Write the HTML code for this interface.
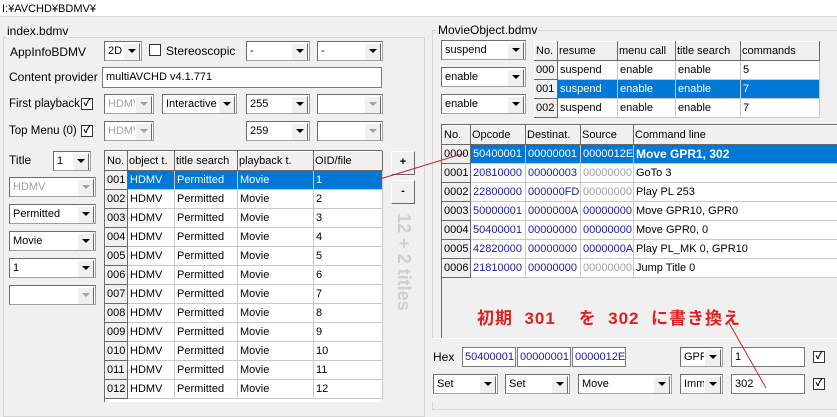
<!DOCTYPE html><html><head><meta charset="utf-8"><style>
*{box-sizing:border-box;margin:0;padding:0}
body{width:837px;height:402px;overflow:hidden;background:#f0f0f0;font-family:"Liberation Sans","Noto Sans CJK JP",sans-serif;font-size:11px;color:#000;position:relative}
.a{position:absolute}
.t{position:absolute;white-space:nowrap;line-height:14px;font-size:12px}
.sel{position:absolute;background:#fff;border:1px solid #a0a0a0;border-top-color:#6d6d6d;border-left-color:#6d6d6d;height:20px;padding:3px 0 0 3px;white-space:nowrap;overflow:hidden}
.sel:after{content:"";position:absolute;right:1px;top:1px;width:15px;height:16px;background:#f0f0f0;border:1px solid #fff;border-right-color:#696969;border-bottom-color:#696969}
.sel:before{content:"";position:absolute;right:5px;top:7px;border:4px solid transparent;border-top:4px solid #000;z-index:2}
.dis{color:#a0a0a0;background:#fff}
.dis:before{border-top-color:#a0a0a0}
.inp{position:absolute;background:#fff;border:1px solid #7a7a7a;height:21px;padding:3px 0 0 3px;white-space:nowrap;overflow:hidden}
.cb{position:absolute;width:12px;height:12px;background:#fff;border:1px solid #333;font-size:10px;line-height:10px;text-align:center;font-weight:bold}
table{position:absolute;border-collapse:collapse;background:#fff;table-layout:fixed}
td{border:1px solid #c8c8c8;height:19px;padding:0 1px 0 2px;white-space:nowrap;overflow:hidden;line-height:17px}
td.h{background:#f0f0f0;border:1px solid #888;border-color:#fff #696969 #696969 #fff;padding:0 1px}
tr.s td{background:#0078d7;color:#fff}
tr.s td.h{background:#f0f0f0;color:#000}
.b{color:#1a1aa8}.g{color:#a0a0a0}
.btn{position:absolute;width:24px;height:24px;background:#f0f0f0;border:1px solid #fff;border-right-color:#696969;border-bottom-color:#696969;text-align:center;font-weight:bold;line-height:20px}
</style></head><body>
<div class="a" style="left:0;top:0;width:837px;height:17px;background:#fff;border-bottom:1px solid #d8d8d8"></div>
<div class="t" style="left:2px;top:2px;font-size:11px">I:¥AVCHD¥BDMV¥</div>
<div class="a" style="left:3px;top:37px;width:422px;height:380px;border:1px solid #d5d5d5"></div>
<div class="t" style="left:6px;top:24px;background:#f0f0f0;padding:0 1px">index.bdmv</div>
<div class="a" style="left:432px;top:30px;width:420px;height:380px;border:1px solid #d5d5d5"></div>
<div class="t" style="left:437px;top:23px;background:#f0f0f0;padding:0 1px">MovieObject.bdmv</div>

<div class="t" style="left:10px;top:45px">AppInfoBDMV</div>
<div class="sel" style="left:104px;top:41px;width:38px">2D</div>
<div class="cb" style="left:149px;top:44px"></div>
<div class="t" style="left:166px;top:44px">Stereoscopic</div>
<div class="sel" style="left:246px;top:41px;width:64px">-</div>
<div class="sel" style="left:317px;top:41px;width:66px">-</div>
<div class="t" style="left:9px;top:70px">Content provider</div>
<div class="inp" style="left:102px;top:67px;width:280px">multiAVCHD v4.1.771</div>
<div class="t" style="left:9px;top:97px;font-size:11.5px">First playback</div>
<div class="cb" style="left:81px;top:98px">✓</div>
<div class="sel dis" style="left:104px;top:94px;width:50px">HDMV</div>
<div class="sel" style="left:162px;top:94px;width:75px">Interactive</div>
<div class="sel" style="left:246px;top:94px;width:64px">255</div>
<div class="sel dis" style="left:317px;top:94px;width:66px"></div>
<div class="t" style="left:9px;top:124px;font-size:11.5px">Top Menu (0)</div>
<div class="cb" style="left:81px;top:125px">✓</div>
<div class="sel dis" style="left:104px;top:121px;width:50px">HDMV</div>
<div class="sel" style="left:246px;top:121px;width:64px">259</div>
<div class="sel dis" style="left:317px;top:121px;width:66px"></div>
<div class="t" style="left:9px;top:153px">Title</div>
<div class="sel" style="left:53px;top:151px;width:38px">1</div>
<div class="sel dis" style="left:9px;top:177px;width:87px">HDMV</div>
<div class="sel" style="left:9px;top:204px;width:87px">Permitted</div>
<div class="sel" style="left:9px;top:231px;width:87px">Movie</div>
<div class="sel" style="left:9px;top:258px;width:87px">1</div>
<div class="sel dis" style="left:9px;top:285px;width:87px"></div>

<div class="a" style="left:104px;top:150px;width:278px;height:252px;background:#fff;border-left:1px solid #696969;border-top:1px solid #696969"></div>
<table style="left:105px;top:151px;width:277px">
<colgroup><col style="width:22px"><col style="width:47px"><col style="width:63px"><col style="width:76px"><col style="width:69px"></colgroup>
<tr><td class="h">No.</td><td class="h">object t.</td><td class="h">title search</td><td class="h">playback t.</td><td class="h">OID/file</td></tr>
<tr class="s"><td class="h">001</td><td>HDMV</td><td>Permitted</td><td>Movie</td><td>1</td></tr>
<tr><td class="h">002</td><td>HDMV</td><td>Permitted</td><td>Movie</td><td>2</td></tr>
<tr><td class="h">003</td><td>HDMV</td><td>Permitted</td><td>Movie</td><td>3</td></tr>
<tr><td class="h">004</td><td>HDMV</td><td>Permitted</td><td>Movie</td><td>4</td></tr>
<tr><td class="h">005</td><td>HDMV</td><td>Permitted</td><td>Movie</td><td>5</td></tr>
<tr><td class="h">006</td><td>HDMV</td><td>Permitted</td><td>Movie</td><td>6</td></tr>
<tr><td class="h">007</td><td>HDMV</td><td>Permitted</td><td>Movie</td><td>7</td></tr>
<tr><td class="h">008</td><td>HDMV</td><td>Permitted</td><td>Movie</td><td>8</td></tr>
<tr><td class="h">009</td><td>HDMV</td><td>Permitted</td><td>Movie</td><td>9</td></tr>
<tr><td class="h">010</td><td>HDMV</td><td>Permitted</td><td>Movie</td><td>10</td></tr>
<tr><td class="h">011</td><td>HDMV</td><td>Permitted</td><td>Movie</td><td>11</td></tr>
<tr><td class="h">012</td><td>HDMV</td><td>Permitted</td><td>Movie</td><td>12</td></tr>
</table>
<div class="btn" style="left:391px;top:151px">+</div>
<div class="btn" style="left:391px;top:180px">-</div>
<div class="t" style="left:404px;top:262px;transform:translate(-50%,-50%) rotate(90deg);font-size:18px;font-weight:bold;color:#cfcfcf;line-height:20px">12 + 2 titles</div>

<div class="sel" style="left:441px;top:40px;width:85px">suspend</div>
<div class="sel" style="left:441px;top:67px;width:85px">enable</div>
<div class="sel" style="left:441px;top:94px;width:85px">enable</div>
<table style="left:534px;top:41px;width:285px">
<colgroup><col style="width:23px"><col style="width:60px"><col style="width:58px"><col style="width:65px"><col style="width:79px"></colgroup>
<tr><td class="h">No.</td><td class="h">resume</td><td class="h">menu call</td><td class="h">title search</td><td class="h">commands</td></tr>
<tr><td class="h">000</td><td>suspend</td><td>enable</td><td>enable</td><td>5</td></tr>
<tr class="s"><td class="h">001</td><td>suspend</td><td>enable</td><td>enable</td><td>7</td></tr>
<tr><td class="h">002</td><td>suspend</td><td>enable</td><td>enable</td><td>7</td></tr>
</table>

<div class="a" style="left:441px;top:124px;width:396px;height:220px;border-left:1px solid #696969;border-top:1px solid #696969"></div>
<table style="left:442px;top:125px;width:400px;background:transparent">
<colgroup><col style="width:28px"><col style="width:55px"><col style="width:55px"><col style="width:53px"><col style="width:209px"></colgroup>
<tr><td class="h">No.</td><td class="h">Opcode</td><td class="h">Destinat.</td><td class="h">Source</td><td class="h">Command line</td></tr>
<tr class="s"><td class="h">0000</td><td>50400001</td><td>00000001</td><td>0000012E</td><td style="font-weight:bold;font-size:12px">Move GPR1, 302</td></tr>
<tr style="background:#fff"><td class="h">0001</td><td class="b">20810000</td><td class="b">00000003</td><td class="g">00000000</td><td>GoTo 3</td></tr>
<tr style="background:#fff"><td class="h">0002</td><td class="b">22800000</td><td class="b">000000FD</td><td class="g">00000000</td><td>Play PL 253</td></tr>
<tr style="background:#fff"><td class="h">0003</td><td class="b">50000001</td><td class="b">0000000A</td><td class="b">00000000</td><td>Move GPR10, GPR0</td></tr>
<tr style="background:#fff"><td class="h">0004</td><td class="b">50400001</td><td class="b">00000000</td><td class="b">00000000</td><td>Move GPR0, 0</td></tr>
<tr style="background:#fff"><td class="h">0005</td><td class="b">42820000</td><td class="b">00000000</td><td class="b">0000000A</td><td>Play PL_MK 0, GPR10</td></tr>
<tr style="background:#fff"><td class="h">0006</td><td class="b">21810000</td><td class="b">00000000</td><td class="g">00000000</td><td>Jump Title 0</td></tr>
</table>

<div class="t" style="left:477px;top:308px;font-size:17px;line-height:22px;font-weight:bold;color:#e02020;letter-spacing:1px">初期&nbsp;&nbsp;301&nbsp;&nbsp;&nbsp;&nbsp;を&nbsp;&nbsp;302&nbsp;&nbsp;に書き換え</div>

<div class="a" style="left:432px;top:338px;width:405px;height:64px;background:#f0f0f0;border-top:1px solid #fff"></div>
<div class="t" style="left:433px;top:350px">Hex</div>
<div class="inp b" style="left:462px;top:347px;width:54px;height:20px;padding-left:2px">50400001</div>
<div class="inp b" style="left:517px;top:347px;width:54px;height:20px;padding-left:2px">00000001</div>
<div class="inp b" style="left:572px;top:347px;width:54px;height:20px;padding-left:2px">0000012E</div>
<div class="sel" style="left:680px;top:347px;width:43px">GPR</div>
<div class="inp" style="left:731px;top:347px;width:74px;height:20px">1</div>
<div class="cb" style="left:813px;top:351px">✓</div>
<div class="sel" style="left:433px;top:374px;width:65px">Set</div>
<div class="sel" style="left:505px;top:374px;width:65px">Set</div>
<div class="sel" style="left:578px;top:374px;width:94px">Move</div>
<div class="sel" style="left:680px;top:374px;width:43px">Imm</div>
<div class="inp" style="left:731px;top:374px;width:74px;height:20px">302</div>
<div class="cb" style="left:813px;top:378px">✓</div>

<svg class="a" style="left:0;top:0" width="837" height="402"><line x1="380" y1="179" x2="465" y2="153" stroke="#c0282c" stroke-width="1"/><line x1="728" y1="321" x2="766" y2="388" stroke="#c0282c" stroke-width="1"/></svg>
</body></html>
